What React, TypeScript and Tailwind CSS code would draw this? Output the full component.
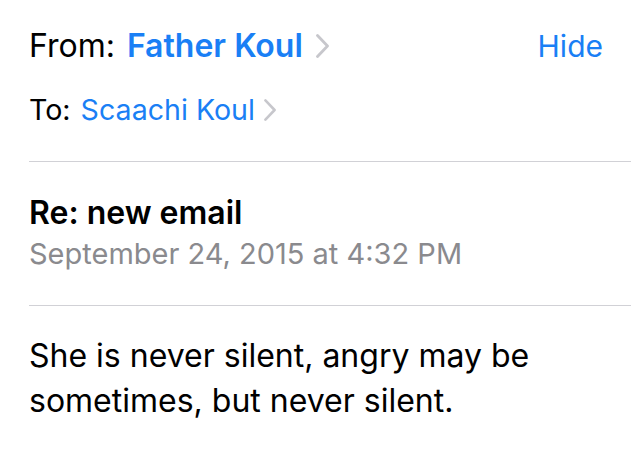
import React from "react";

function Chevron({ className }: { className?: string }) {
  return (
    <svg viewBox="0 0 15 24" className={className} fill="none" stroke="#c7c7cc" strokeWidth={2.8} strokeLinecap="round" strokeLinejoin="round">
      <path d="M2.5 1.5 L12.5 12 L2.5 22.5" />
    </svg>
  );
}

export default function App() {
  return (
    <div className="min-h-screen bg-white pl-[29px] text-black" style={{ fontFamily: "Inter, 'Noto Sans', sans-serif" }}>
      <div className="flex items-baseline justify-between pr-[28px] pt-[26px]">
        <div className="flex items-baseline text-[32px] leading-[40px]">
          <span>From:</span>
          <span className="ml-[12px] font-semibold text-[#1a7ff5]">Father Koul</span>
          <Chevron className="ml-[12px] h-[24px] w-[15px] self-center" />
        </div>
        <span className="text-[30px] leading-[40px] text-[#1a7ff5]">Hide</span>
      </div>
      <div className="flex items-baseline pt-[26px] pb-[33px] text-[28.6px] leading-[36px]">
        <span>To:</span>
        <span className="ml-[10px] text-[#1a7ff5]">Scaachi Koul</span>
        <Chevron className="ml-[8px] h-[22px] w-[14px] self-center" />
      </div>
      <div className="h-px bg-[#d1d1d6]" />
      <div className="pt-[32px] pb-[32px]">
        <div className="text-[32px] font-semibold leading-[38px]">Re: new email</div>
        <div className="mt-[3px] text-[29px] leading-[38px] text-[#8a8a8e]">September 24, 2015 at 4:32 PM</div>
      </div>
      <div className="h-px bg-[#d1d1d6]" />
      <div className="pt-[27px] pr-[20px] text-[32px] leading-[45px]">
        She is never silent, angry may be sometimes, but never silent.
      </div>
    </div>
  );
}
